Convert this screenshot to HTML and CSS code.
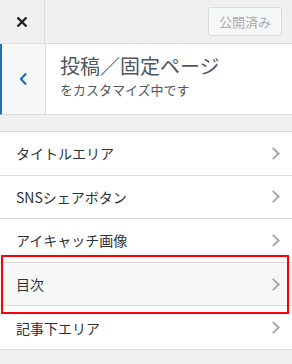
FILE: index.html
```html
<!DOCTYPE html>
<html>
<head>
    <meta charset="UTF-8">
    <title>カスタマイズ</title>
    <link rel="stylesheet" href="styles.css">
</head>

<body>
    <div class="topbar">
        <div class="close">
            <svg width="12" height="12" viewBox="0 0 12 12">
                <path d="M1.5 1.5 L10.5 10.5 M10.5 1.5 L1.5 10.5" stroke="#1d2327" stroke-width="2.4" fill="none"/>
            </svg>
        </div>
        <button class="publish" disabled>公開済み</button>
    </div>

    <div class="panel-head">
        <div class="back">
            <svg width="9" height="14" viewBox="0 0 9 14">
                <path d="M7 1.5 L2 7 L7 12.5" stroke="#2271b1" stroke-width="2.2" fill="none"/>
            </svg>
        </div>
        <div class="head-text">
            <div class="head-title">投稿／固定ページ</div>
            <div class="head-sub">をカスタマイズ中です</div>
        </div>
    </div>

    <ul class="sections">
        <li class="section">タイトルエリア<span class="chev"></span></li>
        <li class="section">SNSシェアボタン<span class="chev"></span></li>
        <li class="section">アイキャッチ画像<span class="chev"></span></li>
        <li class="section hover">目次<span class="chev"></span></li>
        <li class="section">記事下エリア<span class="chev"></span></li>
    </ul>

    <!-- 注目枠 -->
    <div class="mark"></div>
</body>

</html>
```

FILE: styles.css
```css
body {
    margin: 0;
    background-color: #f0f0f1;
    font-family: "Noto Sans CJK JP", "Noto Sans", sans-serif;
    color: #3c434a;
    position: relative;
}

.topbar {
    height: 43px;
    display: flex;
    align-items: center;
    border-bottom: 1px solid #dcdcde;
}

.close {
    width: 45px;
    height: 43px;
    border-right: 1px solid #dcdcde;
    display: flex;
    align-items: center;
    justify-content: center;
    box-sizing: border-box;
}

.publish {
    margin-left: auto;
    margin-right: 10px;
    width: 74px;
    height: 29px;
    font-family: inherit;
    font-size: 13px;
    color: #a7aaad;
    background-color: #f6f7f7;
    border: 1px solid #dcdcde;
    border-radius: 3px;
    padding: 0;
}

.panel-head {
    display: flex;
    height: 70px;
    background-color: #fff;
    border-bottom: 1px solid #dcdcde;
    border-left: 2px solid #2271b1;
}

.back {
    width: 43px;
    background-color: #f6f7f7;
    border-right: 1px solid #dcdcde;
    display: flex;
    align-items: center;
    justify-content: center;
}

.head-text {
    padding: 7px 0 0 14px;
}

.head-title {
    font-size: 20px;
    line-height: 30px;
    color: #50575e;
}

.head-sub {
    font-size: 13px;
    line-height: 18px;
    color: #50575e;
}

.sections {
    list-style: none;
    margin: 16px 0 0;
    padding: 0;
    background-color: #fff;
    border-top: 1px solid #dcdcde;
}

.section {
    height: 42.6px;
    display: flex;
    align-items: center;
    padding: 0 14px 0 16px;
    font-size: 14px;
    color: #2c3338;
    border-bottom: 1px solid #dcdcde;
}

.section.hover {
    background-color: #f6f7f7;
}

.chev {
    margin-left: auto;
    width: 7px;
    height: 7px;
    border-top: 2px solid #a7aaad;
    border-right: 2px solid #a7aaad;
    transform: rotate(45deg);
}

.mark {
    position: absolute;
    left: 1px;
    top: 255px;
    width: 284px;
    height: 55px;
    border: 2px solid #f00;
}
```
